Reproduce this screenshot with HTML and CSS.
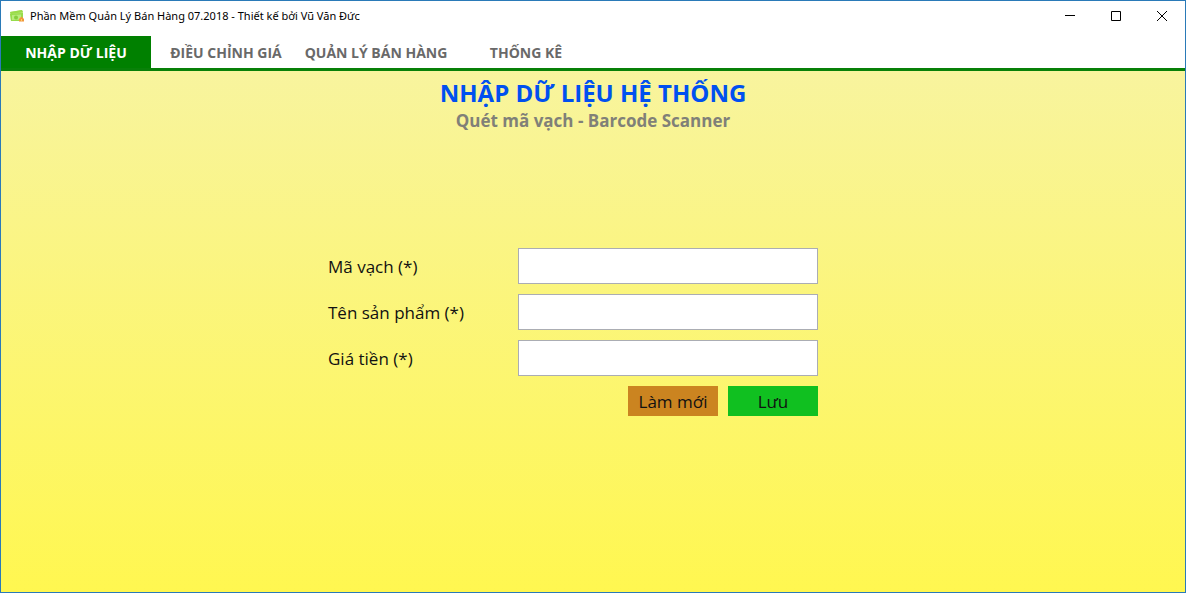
FILE: index.html
```html
<!DOCTYPE html>
<html lang="vi">
<head>
<meta charset="utf-8">
<title>Phần Mềm Quản Lý Bán Hàng</title>
<link rel="stylesheet" href="styles.css">
</head>
<body>
<div class="window">
  <header class="titlebar">
    <svg class="app-icon" viewBox="0 0 16 16" aria-hidden="true">
      <path d="M1 4 13 2l1 3v8L2 13z" fill="#b4e66e"/>
      <path d="M1 4 13 2l1 2-12 2z" fill="#9bdc4b"/>
      <path d="M1 6l13-1v8H2z" fill="#96dc4b"/>
      <path d="M3 7l9-.5v5L3 12z" fill="#b9ec7d"/>
      <circle cx="7" cy="9.500" r="2" fill="#84ce3c"/>
      <path d="M10 13.500V11l2.500-2.500L15 11v2.500z" fill="#f0963c"/>
      <path d="M12 11h1v2h-1z" fill="#ffcf60"/>
    </svg>
    <span class="app-title">Phần Mềm Quản Lý Bán Hàng 07.2018 - Thiết kế bởi Vũ Văn Đức</span>
    <div class="controls">
      <button class="control" type="button" aria-label="Thu nhỏ"><svg viewBox="0 0 10 10"><path d="M0 4.500h10"/></svg></button>
      <button class="control" type="button" aria-label="Phóng to"><svg viewBox="0 0 10 10"><path d="M.5.5h9v9h-9z"/></svg></button>
      <button class="control" type="button" aria-label="Đóng"><svg viewBox="0 0 10 10"><path d="m0 0 10 10M10 0 0 10"/></svg></button>
    </div>
  </header>
  <nav class="tabs">
    <button class="tab tab-active" type="button">NHẬP DỮ LIỆU</button>
    <button class="tab" type="button">ĐIỀU CHỈNH GIÁ</button>
    <button class="tab" type="button">QUẢN LÝ BÁN HÀNG</button>
    <button class="tab" type="button">THỐNG KÊ</button>
  </nav>
  <main class="content">
    <h1 class="heading">NHẬP DỮ LIỆU HỆ THỐNG</h1>
    <p class="subheading">Quét mã vạch - Barcode Scanner</p>
    <form class="form">
      <label class="label" for="barcode">Mã vạch (*)</label>
      <input class="field" id="barcode" type="text">
      <label class="label" for="product">Tên sản phẩm (*)</label>
      <input class="field" id="product" type="text">
      <label class="label" for="price">Giá tiền (*)</label>
      <input class="field" id="price" type="text">
      <div class="actions">
        <button class="button button-reset" type="reset">Làm mới</button>
        <button class="button button-save" type="button">Lưu</button>
      </div>
    </form>
  </main>
</div>
</body>
</html>
```
FILE: styles.css
```css
* {
  box-sizing: border-box;
}

body {
  margin: 0;
  font-family: "Open Sans", "Noto Sans", sans-serif;
}

button {
  font-family: inherit;
  border: 0;
  padding: 0;
}

.window {
  display: flex;
  flex-direction: column;
  min-height: 100vh;
  border: 1px solid #2a7ab8;
  background: #fff;
}

.titlebar {
  display: flex;
  align-items: center;
  height: 29px;
  padding-left: 8px;
}

.app-icon {
  width: 16px;
  height: 16px;
}

.app-title {
  margin-left: 5px;
  font-family: "Noto Sans", sans-serif;
  font-size: 11px;
  color: #000;
}

.controls {
  display: flex;
  align-self: stretch;
  margin-left: auto;
}

.control {
  display: flex;
  align-items: center;
  justify-content: center;
  width: 46px;
  background: transparent;
}

.control svg {
  width: 10px;
  height: 10px;
  fill: none;
  stroke: #000;
  stroke-width: 1;
}

.tabs {
  display: flex;
  margin-top: 6px;
  border-bottom: 3px solid #088008;
}

.tab {
  width: 150px;
  height: 32px;
  background: #fff;
  color: #696969;
  font-size: 14px;
  font-weight: 700;
  white-space: nowrap;
}

.tab-active {
  background: #008000;
  color: #fff;
}

.content {
  display: flex;
  flex: 1;
  flex-direction: column;
  align-items: center;
  background: linear-gradient(#f8f49e, #fff750);
}

.heading {
  margin: 6px 0 0;
  font-size: 24px;
  line-height: 32px;
  font-weight: 700;
  color: #0050f0;
}

.subheading {
  margin: 0;
  font-size: 17px;
  line-height: 24px;
  font-weight: 700;
  color: #808078;
}

.form {
  display: grid;
  grid-template-columns: 190px 300px;
  gap: 10px 0;
  align-items: center;
  margin: 115px 0 20px;
  padding-right: 40px;
}

.label {
  font-size: 17px;
  color: #111;
}

.field {
  width: 100%;
  height: 36px;
  padding: 0 8px;
  border: 1px solid #abadb3;
  background: #fff;
  font: inherit;
  font-size: 17px;
}

.actions {
  display: flex;
  grid-column: 1 / -1;
  justify-content: flex-end;
  gap: 10px;
}

.button {
  width: 90px;
  height: 30px;
  font-size: 17px;
  color: #111;
}

.button-reset {
  background: #cb8420;
}

.button-save {
  background: #10c020;
}
```
